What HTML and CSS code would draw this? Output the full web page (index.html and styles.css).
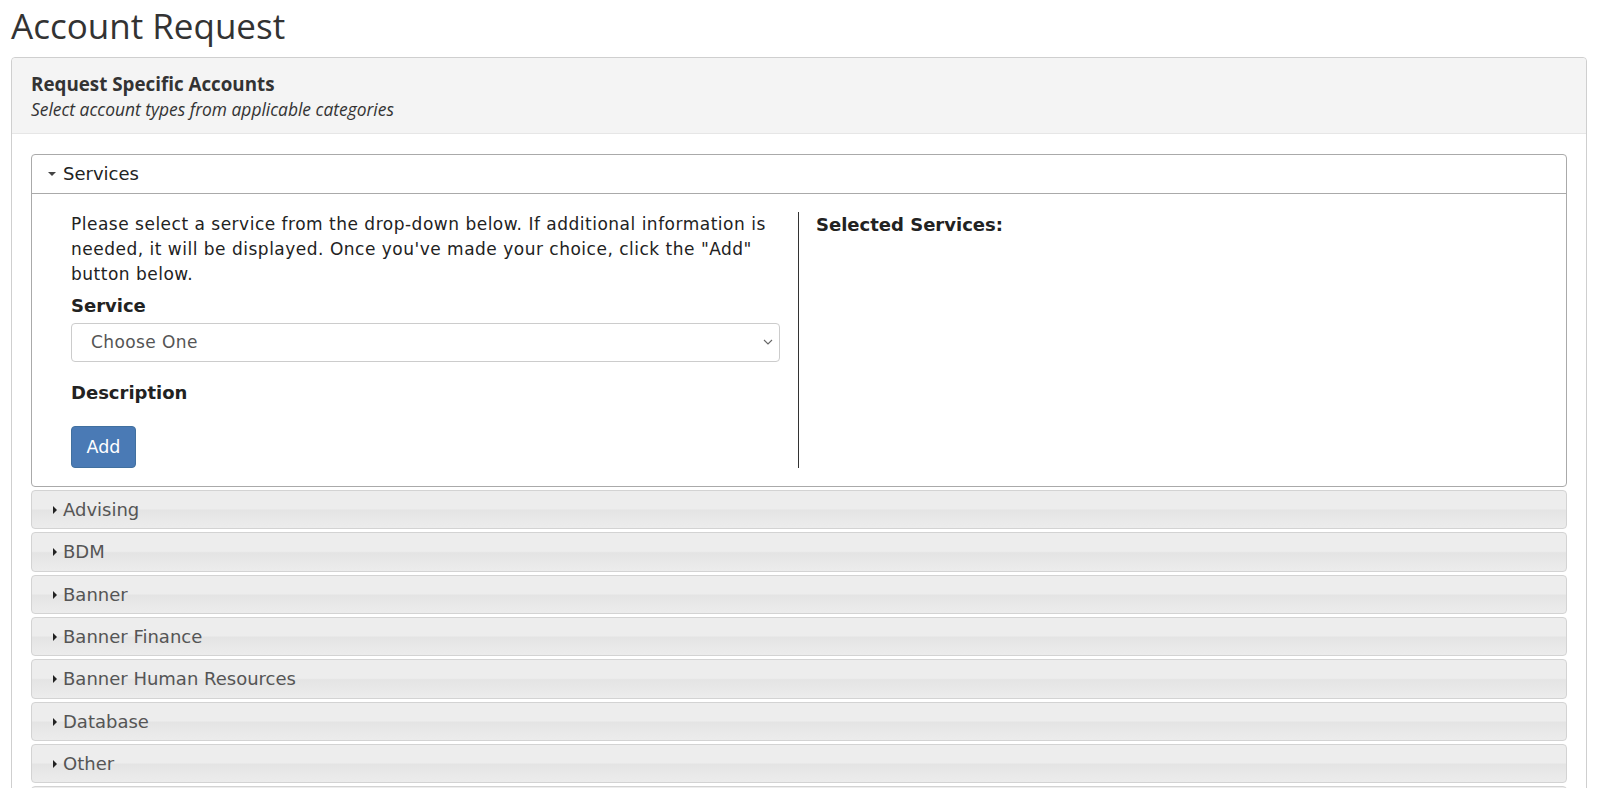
FILE: index.html
```html
<!DOCTYPE html>
<html>
<head>
<meta charset="utf-8">
<link rel="stylesheet" href="styles.css">
</head>
<body>
<h1 class="page-title">Account Request</h1>
<div class="panel">
  <div class="panel-head">
    <div class="panel-title">Request Specific Accounts</div>
    <div class="panel-sub">Select account types from applicable categories</div>
  </div>
  <div class="panel-body">
    <div class="acc acc-open">
      <div class="acc-head"><span class="caret-down"></span>Services</div>
      <div class="acc-body">
        <div class="col-left">
          <p class="intro">Please select a service from the drop-down below. If additional information is needed, it will be displayed. Once you've made your choice, click the "Add" button below.</p>
          <div class="label label-service">Service</div>
          <div class="select">
            <span>Choose One</span>
            <svg class="chev" width="10" height="6" viewBox="0 0 10 6"><path d="M1 1l4 4 4-4" fill="none" stroke="#666" stroke-width="1.1"/></svg>
          </div>
          <div class="label label-desc">Description</div>
          <button class="btn">Add</button>
        </div>
        <div class="col-right">
          <div class="label">Selected Services:</div>
        </div>
      </div>
    </div>
    <div class="acc"><div class="acc-head"><span class="caret-right"></span>Advising</div></div>
    <div class="acc"><div class="acc-head"><span class="caret-right"></span>BDM</div></div>
    <div class="acc"><div class="acc-head"><span class="caret-right"></span>Banner</div></div>
    <div class="acc"><div class="acc-head"><span class="caret-right"></span>Banner Finance</div></div>
    <div class="acc"><div class="acc-head"><span class="caret-right"></span>Banner Human Resources</div></div>
    <div class="acc"><div class="acc-head"><span class="caret-right"></span>Database</div></div>
    <div class="acc"><div class="acc-head"><span class="caret-right"></span>Other</div></div>
    <div class="acc"><div class="acc-head"></div></div>
  </div>
</div>
</body>
</html>
```
FILE: styles.css
```css
html, body {
  margin: 0;
  padding: 0;
  background: #fff;
}
body {
  padding: 0 13px 0 11px;
  font-family: "DejaVu Sans", Verdana, sans-serif;
  color: #222;
  overflow: hidden;
}
.page-title {
  font-family: "Open Sans", sans-serif;
  font-weight: 400;
  font-size: 35px;
  line-height: 44px;
  margin: 4px 0 9px 0;
  color: #333;
}
.panel {
  border: 1px solid #cfcfcf;
  border-radius: 4px;
  background: #fff;
}
.panel-head {
  background: #f4f4f4;
  border-bottom: 1px solid #e6e6e6;
  border-radius: 4px 4px 0 0;
  padding: 13.5px 19px 10.5px 19px;
  font-family: "Open Sans", sans-serif;
  color: #333;
}
.panel-title {
  font-weight: 700;
  font-size: 18.8px;
  line-height: 25.5px;
}
.panel-sub {
  font-style: italic;
  font-size: 17.4px;
  line-height: 25.5px;
}
.panel-body {
  padding: 20px 19px 0 19px;
}
.acc {
  border: 1px solid #d3d3d3;
  border-radius: 4px;
  margin-top: 3px;
  background: linear-gradient(#ededed 0%, #ededed 48%, #e4e4e4 52%, #e8e8e8 75%, #ececec 100%);
}
.acc-open {
  border-color: #aaa;
  background: #fff;
  margin-top: 0;
  margin-bottom: 2px;
}
.acc-head {
  height: 37.3px;
  line-height: 37.3px;
  padding-left: 31px;
  font-size: 18px;
  color: #555;
  position: relative;
}
.acc-open .acc-head {
  height: 37.7px;
  line-height: 37.7px;
  color: #222;
  border-bottom: 1px solid #aaa;
}
.caret-down {
  position: absolute;
  left: 16px;
  top: 17px;
  width: 0;
  height: 0;
  border-left: 4px solid transparent;
  border-right: 4px solid transparent;
  border-top: 4px solid #444;
}
.caret-right {
  position: absolute;
  left: 21px;
  top: 15px;
  width: 0;
  height: 0;
  border-top: 4px solid transparent;
  border-bottom: 4px solid transparent;
  border-left: 4.5px solid #222;
}
.acc-body {
  display: grid;
  grid-template-columns: 727px 1fr;
  padding: 18px 20px 18.4px 39px;
}
.col-left {
  padding-right: 18px;
}
.col-right {
  border-left: 1px solid #333;
  padding-left: 17px;
}
.intro {
  margin: 0;
  font-size: 17px;
  letter-spacing: 0.5px;
  line-height: 25px;
  color: #222;
}
.label {
  font-weight: 700;
  font-size: 18px;
  line-height: 25px;
  color: #222;
}
.label-service {
  margin-top: 6px;
  margin-bottom: 5px;
}
.select {
  box-sizing: border-box;
  height: 39px;
  border: 1px solid #ccc;
  border-radius: 4px;
  display: flex;
  align-items: center;
  justify-content: space-between;
  padding: 0 6px 0 19px;
  font-size: 17px;
  letter-spacing: 0.4px;
  color: #555;
}
.label-desc {
  margin-top: 18px;
  margin-bottom: 21px;
}
.btn {
  display: block;
  box-sizing: border-box;
  background: #4a7ab5;
  border: 1px solid #41709f;
  border-radius: 4px;
  color: #fff;
  font-family: "DejaVu Sans", Verdana, sans-serif;
  font-size: 17.5px;
  height: 42px;
  width: 65px;
  padding: 0;
}
```
